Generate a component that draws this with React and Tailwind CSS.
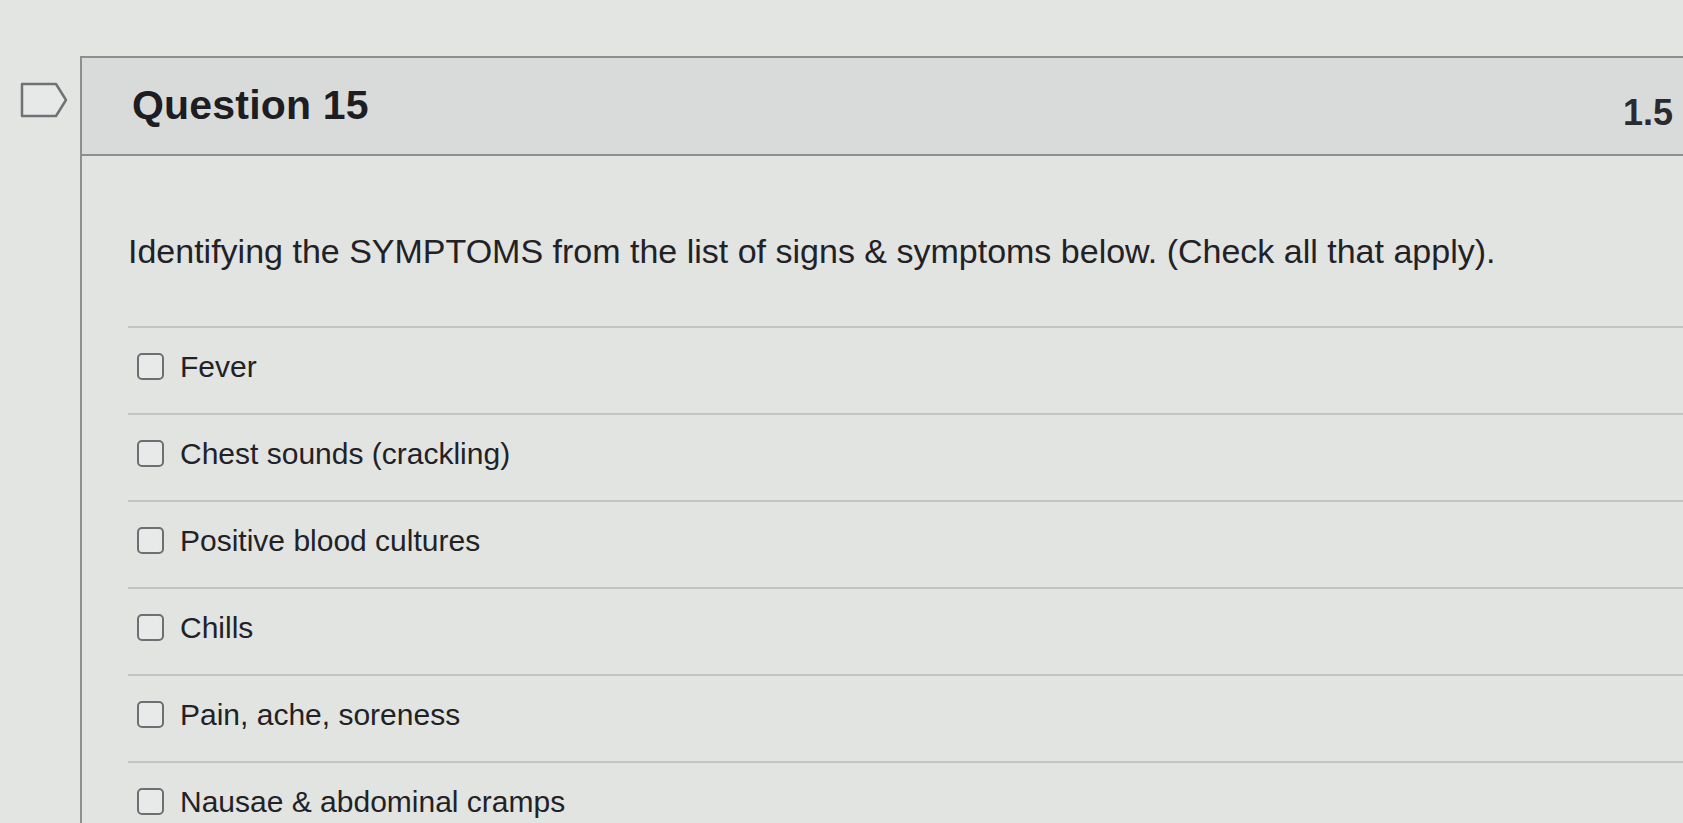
const options = [
  "Fever",
  "Chest sounds (crackling)",
  "Positive blood cultures",
  "Chills",
  "Pain, ache, soreness",
  "Nausae & abdominal cramps",
];

function FlagIcon() {
  return (
    <svg width="48" height="36" viewBox="0 0 48 36" fill="none">
      <path
        d="M2 2 H36 L46 18 L36 34 H2 Z"
        fill="#e7e9e8"
        stroke="#707375"
        strokeWidth="2.5"
        strokeLinejoin="round"
      />
    </svg>
  );
}

export default function App() {
  return (
    <main
      className="flex h-[823px] w-full overflow-hidden bg-[#e3e5e3] text-[#222226]"
      style={{ fontFamily: '"Liberation Sans", Arial, sans-serif' }}
    >
      <aside className="w-[80px] shrink-0 pl-[20px] pt-[82px]">
        <FlagIcon />
      </aside>

      <section className="mt-[56px] flex-1 border-l-2 border-t-2 border-[#8c8f8e] bg-[#e2e4e2]">
        <header className="flex h-[98px] items-center justify-between border-b-2 border-[#8c8f8e] bg-[#d9dbda] pl-[50px] pr-[10px]">
          <h2 className="text-[41px] font-bold tracking-[0.2px] text-[#1d1d22]">Question 15</h2>
          <span className="pt-[14px] text-[36px] font-bold text-[#2a2a30]">1.5</span>
        </header>

        <div className="pl-[46px]">
          <p className="pt-[76px] text-[34px] leading-[38px]">
            Identifying the SYMPTOMS from the list of signs &amp; symptoms below. (Check all that apply).
          </p>

          <ul className="mt-[56px]">
            {options.map((label) => (
              <li
                key={label}
                className="flex h-[87px] items-center gap-[16px] border-t-2 border-[#c3c5c4] pb-[8px] pl-[9px]"
              >
                <span className="h-[27px] w-[27px] shrink-0 rounded-[5px] border-2 border-[#6d7073] bg-[#e8eae9]" />
                <span className="text-[30px] leading-[34px]">{label}</span>
              </li>
            ))}
          </ul>
        </div>
      </section>
    </main>
  );
}
